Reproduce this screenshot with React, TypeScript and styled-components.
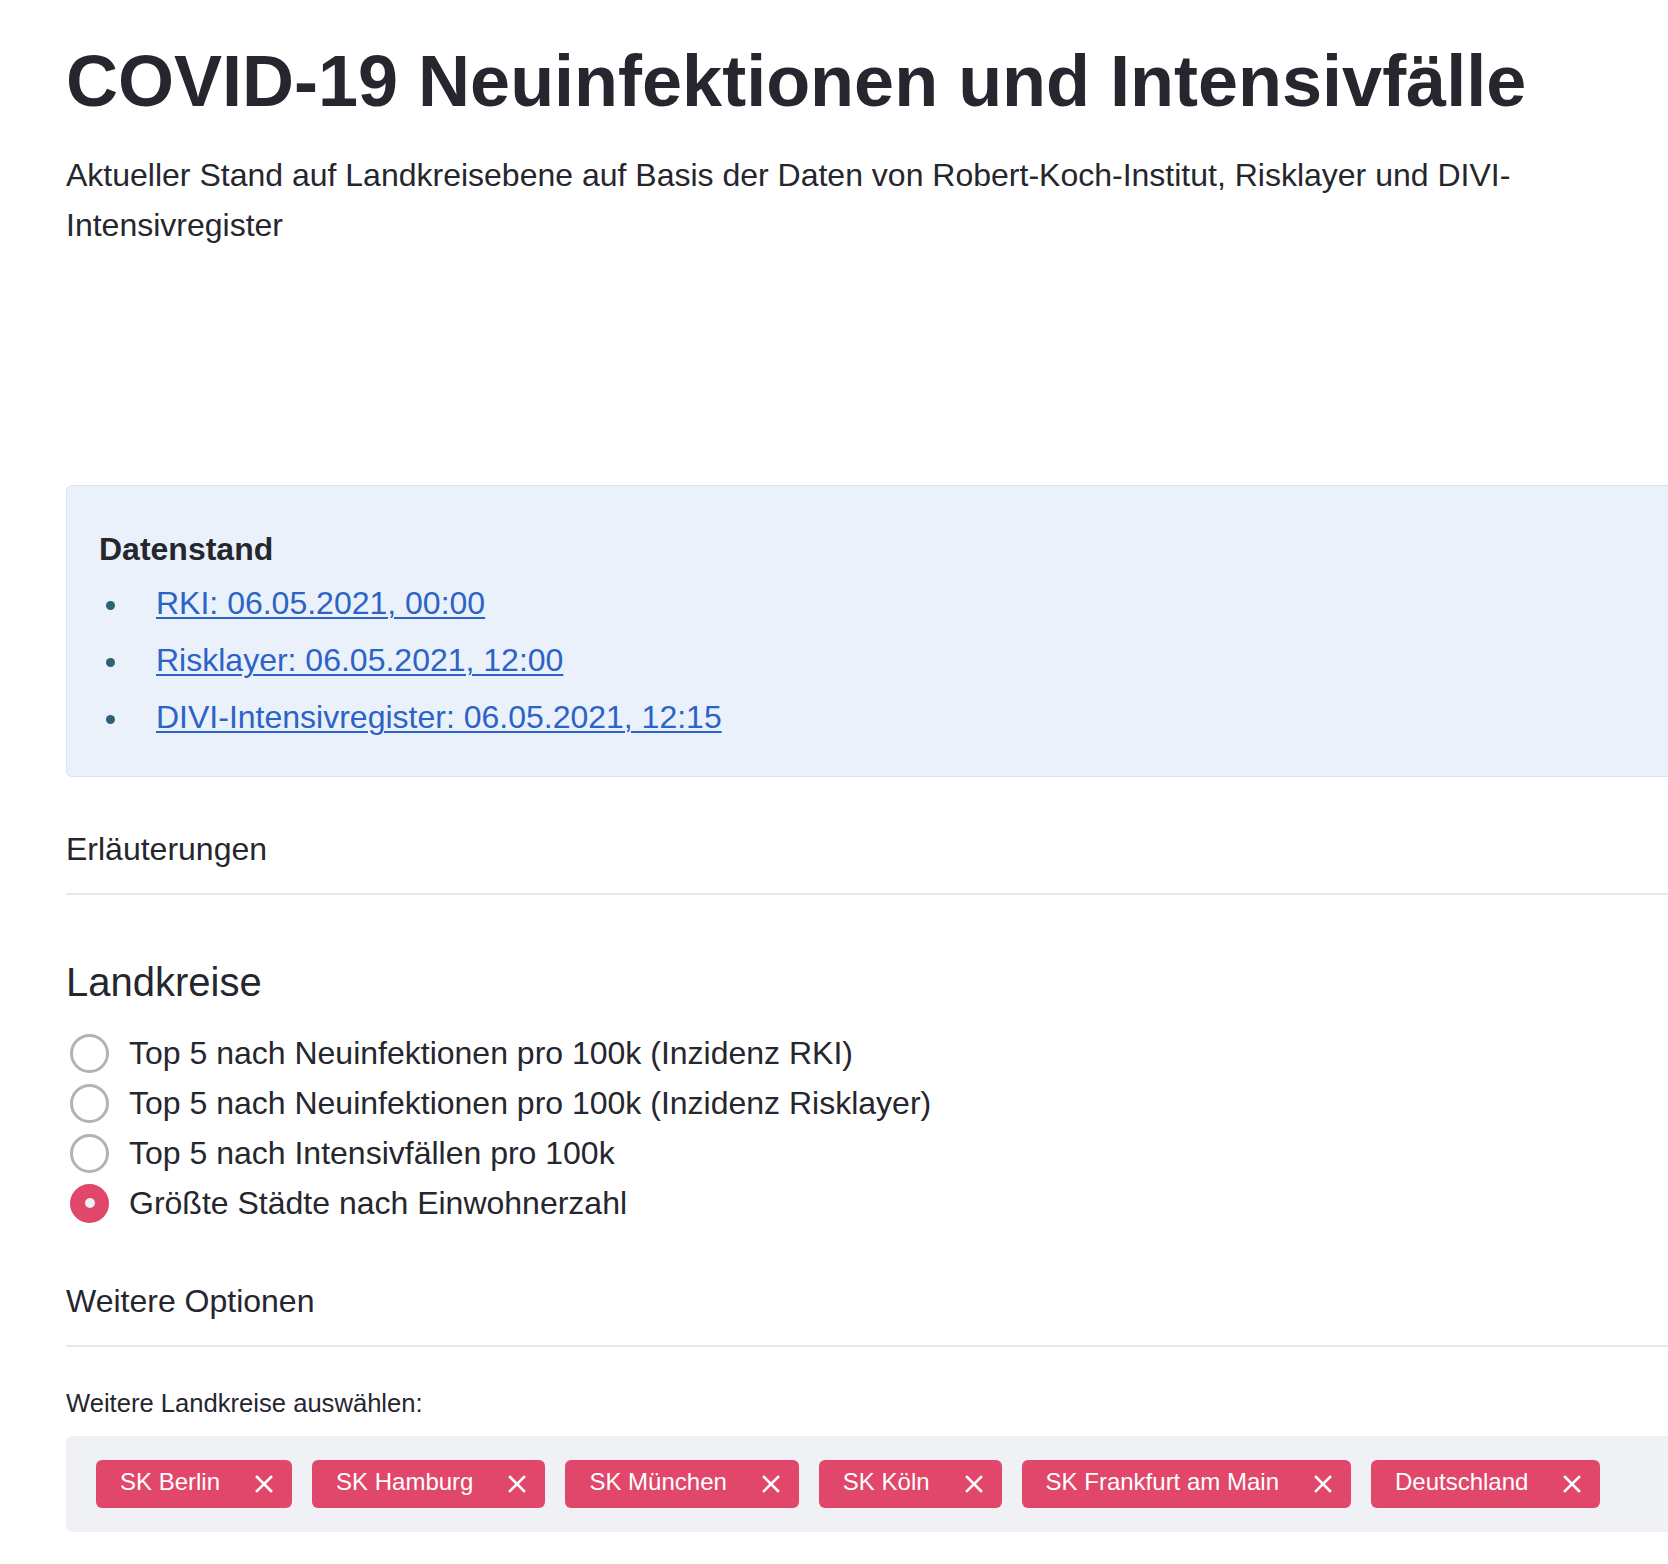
import styled, { createGlobalStyle } from "styled-components";

const GlobalStyle = createGlobalStyle`
    html, body {
        margin: 0;
        padding: 0;
        background: #ffffff;
        overflow-x: hidden;
    }
    body {
        font-family: "Liberation Sans", Arial, Helvetica, sans-serif;
        color: #25262e;
    }
`;

const sources = [
    { label: "RKI: 06.05.2021, 00:00", href: "#rki" },
    { label: "Risklayer: 06.05.2021, 12:00", href: "#risklayer" },
    { label: "DIVI-Intensivregister: 06.05.2021, 12:15", href: "#divi" },
];

const modes = [
    "Top 5 nach Neuinfektionen pro 100k (Inzidenz RKI)",
    "Top 5 nach Neuinfektionen pro 100k (Inzidenz Risklayer)",
    "Top 5 nach Intensivfällen pro 100k",
    "Größte Städte nach Einwohnerzahl",
];

const regions = [
    "SK Berlin",
    "SK Hamburg",
    "SK München",
    "SK Köln",
    "SK Frankfurt am Main",
    "Deutschland",
];

function CloseIcon() {
    return (
        <svg width="18" height="18" viewBox="0 0 18 18" aria-hidden="true">
            <path
                d="M2 2 L16 16 M16 2 L2 16"
                stroke="#ffffff"
                strokeWidth="2.6"
                strokeLinecap="square"
            />
        </svg>
    );
}

export default function App() {
    const selected = 3;

    return (
        <>
            <GlobalStyle />
            <Main>
                <Title>COVID-19 Neuinfektionen und Intensivfälle</Title>
                <Lead>
                    Aktueller Stand auf Landkreisebene auf Basis der Daten von
                    Robert-Koch-Institut, Risklayer und DIVI-Intensivregister
                </Lead>

                <InfoBox>
                    <InfoTitle>Datenstand</InfoTitle>
                    <SourceList>
                        {sources.map((s) => (
                            <li key={s.href}>
                                <a href={s.href}>{s.label}</a>
                            </li>
                        ))}
                    </SourceList>
                </InfoBox>

                <SectionToggle>Erläuterungen</SectionToggle>

                <Heading>Landkreise</Heading>
                <RadioGroup>
                    {modes.map((m, i) => (
                        <RadioRow key={m}>
                            <RadioDot $checked={i === selected} />
                            <span>{m}</span>
                        </RadioRow>
                    ))}
                </RadioGroup>

                <SectionToggle $top={49}>Weitere Optionen</SectionToggle>

                <FieldLabel>Weitere Landkreise auswählen:</FieldLabel>
                <ChipBox>
                    {regions.map((r) => (
                        <Chip key={r}>
                            <span>{r}</span>
                            <CloseIcon />
                        </Chip>
                    ))}
                </ChipBox>
            </Main>
        </>
    );
}

const Main = styled.main`
    margin-left: 66px;
    width: 1660px;
`;

const Title = styled.h1`
    margin: 38px 0 0;
    font-size: 72px;
    line-height: 1.2;
    font-weight: 700;
    color: #25262e;
`;

const Lead = styled.p`
    margin: 26px 0 0;
    max-width: 1560px;
    font-size: 32px;
    line-height: 50px;
`;

const InfoBox = styled.div`
    margin-top: 235px;
    padding: 39px 32px 35px;
    background-color: #eaf1fb;
    border: 1px solid #d7e4f6;
    border-radius: 6px;
`;

const InfoTitle = styled.div`
    font-size: 32px;
    line-height: 48px;
    font-weight: 700;
`;

const SourceList = styled.ul`
    list-style: none;
    margin: 6px 0 0;
    padding: 0;
    display: flex;
    flex-direction: column;
    gap: 9px;

    li {
        display: flex;
        align-items: center;
        font-size: 32px;
        line-height: 48px;
    }
    li::before {
        content: "";
        width: 9px;
        height: 9px;
        border-radius: 50%;
        background-color: #2d6275;
        margin: 0 41px 0 7px;
        transform: translateY(2px);
    }
    a {
        color: #2b63c6;
        text-decoration: underline;
        text-decoration-thickness: 2px;
        text-underline-offset: 3px;
    }
`;

const SectionToggle = styled.div<{ $top?: number }>`
    margin-top: ${(p) => p.$top ?? 48}px;
    padding-bottom: 20px;
    border-bottom: 2px solid #e7e7e9;
    font-size: 32px;
    line-height: 48px;
`;

const Heading = styled.h2`
    margin: 63px 0 0;
    font-size: 40px;
    line-height: 48px;
    font-weight: 400;
`;

const RadioGroup = styled.div`
    margin-top: 22px;
    display: flex;
    flex-direction: column;
`;

const RadioRow = styled.label`
    display: flex;
    align-items: center;
    gap: 20px;
    height: 50px;
    font-size: 32px;
    line-height: 50px;
    cursor: pointer;
`;

const RadioDot = styled.span<{ $checked: boolean }>`
    box-sizing: border-box;
    flex: none;
    margin-left: 4px;
    width: 39px;
    height: 39px;
    border-radius: 50%;
    border: 3px solid ${(p) => (p.$checked ? "#e0476b" : "#b3b3b6")};
    background-color: ${(p) => (p.$checked ? "#e0476b" : "#ffffff")};
    display: flex;
    align-items: center;
    justify-content: center;

    &::after {
        content: "";
        display: ${(p) => (p.$checked ? "block" : "none")};
        width: 10px;
        height: 10px;
        border-radius: 50%;
        background-color: #eef0f5;
    }
`;

const FieldLabel = styled.div`
    margin-top: 37px;
    font-size: 25.6px;
    line-height: 38.4px;
`;

const ChipBox = styled.div`
    margin-top: 13px;
    padding: 24px 30px;
    background-color: #f0f1f5;
    border-radius: 6px;
    display: flex;
    flex-wrap: wrap;
    gap: 20px;
`;

const Chip = styled.div`
    display: flex;
    align-items: center;
    height: 48px;
    box-sizing: border-box;
    padding: 0 19px 0 24px;
    background-color: #e0476a;
    border-radius: 6px;
    color: #ffffff;
    font-size: 24px;

    span {
        line-height: 44px;
        padding-bottom: 4px;
        margin-right: 35px;
    }
    svg {
        flex: none;
    }
`;
